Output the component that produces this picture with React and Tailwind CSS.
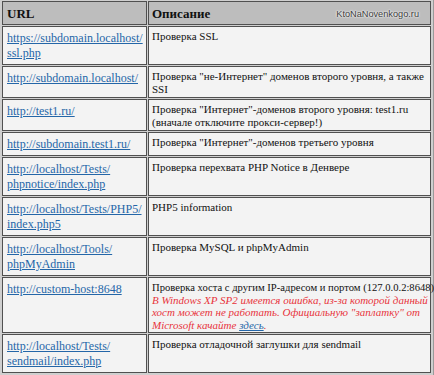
import React from "react";

const rows = [
  { url: ["https://subdomain.localhost/", "ssl.php"], desc: [["Проверка SSL"]] },
  { url: ["http://subdomain.localhost/"], desc: [["Проверка \"не-Интернет\" доменов второго уровня, а также"], ["SSI"]] },
  { url: ["http://test1.ru/"], desc: [["Проверка \"Интернет\"-доменов второго уровня: test1.ru"], ["(вначале отключите прокси-сервер!)"]] },
  { url: ["http://subdomain.test1.ru/"], desc: [["Проверка \"Интернет\"-доменов третьего уровня"]] },
  { url: ["http://localhost/Tests/", "phpnotice/index.php"], desc: [["Проверка перехвата PHP Notice в Денвере"]] },
  { url: ["http://localhost/Tests/PHP5/", "index.php5"], desc: [["PHP5 information"]] },
  { url: ["http://localhost/Tools/", "phpMyAdmin"], desc: [["Проверка MySQL и phpMyAdmin"]] },
  { url: ["http://custom-host:8648"], special: true },
  { url: ["http://localhost/Tests/", "sendmail/index.php"], desc: [["Проверка отладочной заглушки для sendmail"]] },
];

const serif = { fontFamily: '"Liberation Serif", "Times New Roman", serif' };

function UrlCell({ lines }) {
  return (
    <div className="border border-[#505050] bg-[#f3f3f3] pl-[4px] pr-[1px] pt-[4px] pb-[3px] text-[12px] leading-[15px]">
      <a href="#" className="text-[#2466a8] underline whitespace-nowrap">
        {lines.map((l, i) => (
          <React.Fragment key={i}>
            {i > 0 && <br />}
            {l}
          </React.Fragment>
        ))}
      </a>
    </div>
  );
}

function DescCell({ row }) {
  return (
    <div className="border border-[#505050] bg-[#f3f3f3] pl-[3px] pr-[1px] pt-[3px] pb-[1px] text-[11px] leading-[13px] text-[#111]">
      {row.special ? (
        <>
          <div className="whitespace-nowrap text-[10.6px]">Проверка хоста с другим IP-адресом и портом (127.0.0.2:8648)</div>
          <div className="italic text-[#e8333c] text-[11px] leading-[12.3px] whitespace-nowrap">
            В Windows XP SP2 имеется ошибка, из-за которой данный
            <br />
            хост может не работать. Официальную "заплатку" от
            <br />
            Microsoft качайте{" "}
            <a href="#" className="text-[#2466a8] underline">здесь</a>.
          </div>
        </>
      ) : (
        row.desc.map((l, i) => (
          <div key={i} className="whitespace-nowrap">{l[0]}</div>
        ))
      )}
    </div>
  );
}

export default function App() {
  return (
    <div className="w-[434px] h-[375px] overflow-hidden bg-[#cfcfcf]" style={serif}>
      <div className="grid grid-cols-[145px_283px] gap-[1px] pl-[2px] pt-[1px] pb-[2px] border-r border-b border-[#9a9a9a]">
        <div className="border border-[#505050] bg-[#bdbdbd] pl-[4px] h-[24px] flex items-center text-[13px] leading-[15px] font-bold text-[#111]">
          URL
        </div>
        <div className="relative border border-[#505050] bg-[#bdbdbd] pl-[3px] h-[24px] flex items-center text-[13px] leading-[15px] font-bold text-[#111]">
          Описание
          <span
            className="absolute right-[11px] top-[8px] text-[9.2px] font-normal text-[#3a3a3a] leading-none"
            style={{ fontFamily: '"Liberation Sans", Arial, sans-serif', textShadow: "0 0 2px #fff, 0 0 2px #fff" }}
          >
            KtoNaNovenkogo.ru
          </span>
        </div>
        {rows.map((r, i) => (
          <React.Fragment key={i}>
            <UrlCell lines={r.url} />
            <DescCell row={r} />
          </React.Fragment>
        ))}
      </div>
    </div>
  );
}
